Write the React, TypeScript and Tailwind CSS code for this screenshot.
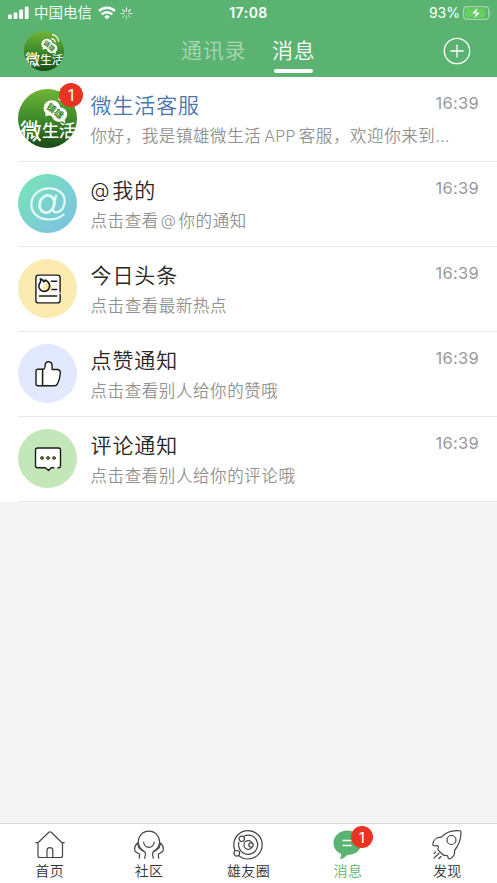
import React from 'react';

interface Message {
  id: string;
  title: React.ReactNode;
  text: React.ReactNode;
  time: string;
  badge?: number;
  official?: boolean;
  icon: React.ReactNode;
}

interface TabItem {
  id: string;
  label: string;
  badge?: number;
  active?: boolean;
  icon: React.ReactNode;
}

const BrandAvatar: React.FC<{ id: string; className: string; waves?: boolean }> = ({ id, className, waves }) => (
  <svg viewBox="0 0 60 60" className={className}>
    <defs>
      <linearGradient id={id} x1="0" y1="0" x2="0" y2="1">
        <stop offset="0" stopColor="#6fb536" />
        <stop offset="0.5" stopColor="#3f8a2b" />
        <stop offset="1" stopColor="#184a18" />
      </linearGradient>
      <clipPath id={`${id}-clip`}>
        <circle cx="30" cy="30" r="30" />
      </clipPath>
    </defs>
    <g clipPath={`url(#${id}-clip)`}>
      <rect width="60" height="60" fill={`url(#${id})`} />
      <g fill="#fff">
        <ellipse cx="34.5" cy="19.5" rx="8.5" ry="8" />
        <ellipse cx="42" cy="26" rx="8" ry="7.5" />
        <path d="M28 24l0 4 5-2zM43 31l5 4-1-7z" />
      </g>
      <g transform="rotate(38 38 22)" fill="#3c8b2c" fontFamily="Noto Sans CJK SC, sans-serif" fontWeight="700">
        <text x="28.5" y="26" fontSize="9.5">镇雄</text>
      </g>
      {waves ? (
        <g fill="none" stroke="#fff" strokeWidth="1.8">
          <path d="M41 11q5 1 6 6M42 5q9 2 10 11" />
        </g>
      ) : (
        <path d="M41 10l4 3" stroke="#fff" strokeWidth="1.2" />
      )}
      <g fill="#fff" fontFamily="Noto Sans CJK SC, sans-serif" fontWeight="500">
        <text x="2" y="50.5" fontSize="22">微</text>
        <text x="24.5" y="49" fontSize="17.5">生</text>
        <text x="41.5" y="49" fontSize="17.5">活</text>
      </g>
    </g>
  </svg>
);

const MentionIcon = () => (
  <svg viewBox="0 0 36 34" className="h-[34px] w-9" fill="none" stroke="#e5fbf5" strokeLinecap="round">
    <path d="M33.7 27.5C29.5 31 24.5 32.5 18.5 32.5 8.500 32.500 1.300 26 1.300 17.500 1.300 8.300 9 1.300 19 1.300c9 0 15.700 5.400 15.700 13 0 6.500-4 11-8.600 11-2.600 0-3.600-1.600-3-4.300L26 8.500" strokeWidth="2.2" />
    <ellipse cx="17" cy="17" rx="7.2" ry="8.8" transform="rotate(20 17 17)" strokeWidth="2.8" />
  </svg>
);

const NewsIcon = () => (
  <svg viewBox="0 0 28 32" className="h-8 w-7" fill="none" stroke="#1c1c1c" strokeWidth="1.4" strokeLinecap="round" strokeLinejoin="round">
    <path d="M26.1 19V4.5a2.4 2.4 0 0 0-2.4-2.4H4.3A2.4 2.4 0 0 0 1.9 4.5v23a2.4 2.4 0 0 0 2.4 2.4h19.4a2.4 2.4 0 0 0 2.4-2.4v-6.3" fill="#fff" />
    <circle cx="13.5" cy="14.5" r="4.5" fill="#fbeaa9" stroke="none" />
    <path d="M6.3 5.800c2 .6 3 1.700 3.500 3 .8-.3 1.200-.9 1.300-1.700 3 1.300 4.500 3.400 4.500 5.900a5.400 5.400 0 0 1-10.800 0c0-1.600.9-2.600 1.500-3.700.6-1.100.5-2.200 0-3.500z" strokeWidth="1.6" />
    <path d="M17.5 8.300h5.200M18 16.500h4.700M5.500 23h17.200" strokeWidth="1.6" />
  </svg>
);

const LikeIcon = () => (
  <svg viewBox="0 0 28 28" className="h-7 w-7" fill="#fff" stroke="#1c1c1c" strokeWidth="1.4" strokeLinecap="round" strokeLinejoin="round">
    <path d="M8.5 9.500c2.300-.2 2.600-1.200 2.600-4 0-5.200 7-4.900 7 .5v3.500h5c2.400 0 3.400 1.500 3.200 3.700-.3 4.400-1.300 7.700-3 11-.6 1-1.300 1.500-2.300 1.500H8.500z" />
    <path d="M8.500 9.200H4a2 2 0 0 0-2 2v12.500a2 2 0 0 0 2 2h4.500z" />
  </svg>
);

const CommentIcon = () => (
  <svg viewBox="0 0 28 26" className="h-[26px] w-7" fill="none" stroke="#1c1c1c" strokeWidth="1.4" strokeLinecap="round" strokeLinejoin="round">
    <path d="M24 21.700h.7a1.800 1.800 0 0 0 1.800-1.800V4a2 2 0 0 0-2-2h-21a2 2 0 0 0-2 2v15.700a2 2 0 0 0 2 2h8l3 2.700 2.700-2.700h2.600" fill="#fff" />
    <g fill="#8fc046" strokeWidth="0.9">
      <circle cx="8" cy="12" r="1.4" />
      <circle cx="14" cy="12" r="1.4" />
      <circle cx="20" cy="12" r="1.4" />
    </g>
  </svg>
);

const lineIcon = {
  viewBox: '0 0 32 32',
  className: 'h-8 w-8',
  fill: 'none',
  stroke: '#444',
  strokeWidth: 1.2,
  strokeLinecap: 'round' as const,
  strokeLinejoin: 'round' as const,
};

const HomeIcon = () => (
  <svg {...lineIcon}>
    <path d="M1.8 13.700h2.200L14.800 3.200q1.200-.9 2.400 0L28 13.700h2.200M4 13.700v12.800a2 2 0 0 0 2 2h20.500a2 2 0 0 0 2-2V14" />
    <path d="M13 28.300v-6.800a2.900 2.900 0 0 1 5.800 0v6.800" />
  </svg>
);

const CommunityIcon = () => (
  <svg {...lineIcon}>
    <path d="M11 22.200a10.600 10.600 0 1 1 9.800 0M10.700 13.200a5.200 5.200 0 0 0 10.400 0" />
    <path d="M4.800 14C1.800 16.200 1 19 2.200 22.500l4.500 2.700-.4 4M5.200 14.500c-.8 3 .4 4.600 2.700 6l3.600 2.200c1.800 1.200 1 3.600.1 6.500" />
    <path d="M27.200 14c3 2.200 3.800 5 2.600 8.500l-4.500 2.700.4 4M26.800 14.500c.8 3-.4 4.600-2.700 6l-3.600 2.200c-1.800 1.200-1 3.600-.1 6.500" />
  </svg>
);

const CircleIcon = () => (
  <svg {...lineIcon}>
    <circle cx="16" cy="15.8" r="14.2" />
    <path d="M12.500 6.800a9.600 9.600 0 1 1-5.700 6.500" />
    <circle cx="16.3" cy="16" r="4.3" />
    <circle cx="9.8" cy="9.8" r="2.7" fill="#fff" />
    <circle cx="19" cy="16" r="2.2" fill="#fff" />
    <circle cx="4.8" cy="24.3" r="2.8" fill="#fff" />
  </svg>
);

const ChatIcon = () => (
  <svg viewBox="0 0 32 32" className="h-8 w-8">
    <path d="M15.5 1.500C7.500 1.500 1.500 7 1.500 14c0 5 2.800 8.800 7.500 10.800.4 1.600-.1 3.300-.8 4.500-.3.700.2 1 .9.700 2.600-1 4.500-2.400 6.100-4C23.500 26 29.500 21 29.500 14S23.500 1.500 15.500 1.500z" fill="#5bb371" />
    <path d="M10.500 11.500h9M10.500 16.500h9" stroke="#fff" strokeWidth="1.3" />
  </svg>
);

const RocketIcon = () => (
  <svg {...lineIcon}>
    <path d="M10.5 8.200C14.500 3.500 21 1 28.500 1.700q1.500.1 1.500 1.600C30 10 28 16 23.500 21.500c.5 4-1.500 7-4.500 8.300-1.200.4-2-.3-2-1.500 0-1.300-.8-2-2-1.800-1.500.3-2.200 0-3.300-1l-3.500-3.300c-1.500-1.300-1.500-2.300-1-3.700.4-1.500-.2-2.200-1.700-1.900-2.500.5-4-.1-3.700-1.600C2.500 10.700 6 8 10.500 8.200z" />
    <circle cx="20.5" cy="11" r="4.5" />
    <path d="M4.800 22.800l-1.800 1.800M8 24.300l-5 4.800M10 27.500l-2 2" />
  </svg>
);

const messages: Message[] = [
  {
    id: 'service',
    title: '微生活客服',
    text: (
      <>
        {'你好\uff0c我是镇雄微生活'}
        <span className="mr-[3px] ml-[3px] text-[16px] tracking-[0.2px]">APP</span>
        {'客服\uff0c欢迎你来到'}
        <span className="tracking-[1px]">…</span>
      </>
    ),
    time: '16:39',
    badge: 1,
    official: true,
    icon: <BrandAvatar id="service-bg" className="size-[59px]" />,
  },
  {
    id: 'mention',
    title: (
      <>
        <span className="mr-[2px] inline-block -translate-y-px text-[19.5px]">@</span>我的
      </>
    ),
    text: (
      <>
        点击查看<span className="mx-[2px] inline-block -translate-y-px text-[15.5px] leading-none">@</span>你的通知
      </>
    ),
    time: '16:39',
    icon: (
      <div className="flex size-[59px] items-center justify-center rounded-full bg-linear-to-br from-[#79e6b5] to-[#7dbde2]">
        <MentionIcon />
      </div>
    ),
  },
  {
    id: 'news',
    title: '今日头条',
    text: '点击查看最新热点',
    time: '16:39',
    icon: <div className="flex size-[59px] items-center justify-center rounded-full bg-[#fbebb0]"><NewsIcon /></div>,
  },
  {
    id: 'like',
    title: '点赞通知',
    text: '点击查看别人给你的赞哦',
    time: '16:39',
    icon: <div className="flex size-[59px] items-center justify-center rounded-full bg-[#e2e8fd]"><LikeIcon /></div>,
  },
  {
    id: 'comment',
    title: '评论通知',
    text: '点击查看别人给你的评论哦',
    time: '16:39',
    icon: <div className="flex size-[59px] items-center justify-center rounded-full bg-[#c4e7b9]"><CommentIcon /></div>,
  },
];

const tabs: TabItem[] = [
  { id: 'home', label: '首页', icon: <HomeIcon /> },
  { id: 'community', label: '社区', icon: <CommunityIcon /> },
  { id: 'circle', label: '雄友圈', icon: <CircleIcon /> },
  { id: 'message', label: '消息', icon: <ChatIcon />, badge: 1, active: true },
  { id: 'discover', label: '发现', icon: <RocketIcon /> },
];

const StatusBar = () => (
  <div className="flex h-[26px] items-center justify-between pr-[6px] pl-2 text-white">
    <div className="flex w-[180px] items-center">
      <svg viewBox="0 0 22 14" className="h-[14px] w-[22px] shrink-0" fill="#fff">
        <rect x="0" y="8.5" width="3.8" height="4.5" rx="1" />
        <rect x="5.6" y="6.5" width="3.8" height="6.5" rx="1" />
        <rect x="11.2" y="3.5" width="3.8" height="9.5" rx="1" />
        <rect x="16.8" y="0.5" width="3.8" height="12.5" rx="1" />
      </svg>
      <span className="ml-1 text-[14.5px] leading-5 font-[350]">中国电信</span>
      <svg viewBox="0 0 18 14" className="ml-[6px] h-[14px] w-[18px] shrink-0" fill="none" stroke="#fff" strokeWidth="2.5">
        <path d="M1 5a11.5 11.5 0 0 1 16 0M3.800 8.400a7.200 7.200 0 0 1 10.400 0" />
        <path d="M6.300 10.600a4 4 0 0 1 5.400 0L9 13.500z" fill="#fff" stroke="none" />
      </svg>
      <svg viewBox="0 0 14 14" className="ml-1 h-[13px] w-[13px] shrink-0" stroke="#fff" strokeWidth="1.2" strokeLinecap="round">
        <path d="M7 1v3.200M11.200 2.800L9 5M2.800 2.800L5 5" />
        <path d="M13 7H9.800M4.200 7H1" opacity="0.75" />
        <path d="M11.200 11.200L9 9M7 13V9.800M2.800 11.200L5 9" opacity="0.5" />
      </svg>
    </div>
    <span className="-ml-[2px] text-[14px] leading-5 font-semibold tracking-[0.5px]">17:08</span>
    <div className="flex w-[180px] items-center justify-end">
      <span className="text-[14px] leading-5">93%</span>
      <svg viewBox="0 0 28 14" className="ml-[3px] h-[14px] w-7">
        <rect x="0.6" y="0.6" width="25" height="12.8" rx="3.5" fill="none" stroke="#a4d5af" strokeWidth="1.2" />
        <rect x="2.2" y="2.2" width="20" height="9.6" rx="2" fill="#65d060" />
        <path d="M26.700 4.700q2 2.300 0 4.600z" fill="#a4d5af" />
        <path d="M15 1L8.500 7.700h4L11 13 17.500 6.300h-4z" fill="#fff" stroke="#5bb371" strokeWidth="0.5" />
      </svg>
    </div>
  </div>
);

const Header = () => (
  <header className="h-[77px] bg-[#5bb371]">
    <StatusBar />
    <div className="grid h-[51px] grid-cols-[157px_1fr_40px] items-start pr-[14px] pl-6">
      <BrandAvatar id="me-bg" className="mt-[5px] size-10" waves />
      <nav className="flex gap-[26px] text-[21px] leading-[30px] font-[350] tracking-[0.7px]">
        <span className="mt-[10px] text-[#a9d8b4]">通讯录</span>
        <div className="mt-[10px] flex flex-col items-center text-white">
          <span>消息</span>
          <span className="mt-[3px] h-[3.5px] w-[39px] rounded-full bg-white" />
        </div>
      </nav>
      <svg viewBox="0 0 28 28" className="mt-[11px] size-7" fill="none" stroke="#fff" strokeWidth="1.3">
        <circle cx="14" cy="14" r="12.7" />
        <path d="M14 7.500v13M7.500 14h13" />
      </svg>
    </div>
  </header>
);

const MessageRow: React.FC<{ message: Message }> = ({ message }) => (
  <li className="flex h-[85.1px] pl-[18px]">
    <div className="flex flex-1 border-b border-[#e9e9e9] pr-[18px]">
      <div className="relative mt-3 size-[59px] shrink-0">
        {message.icon}
        {message.badge && (
          <span className="absolute -top-[6px] left-[41px] flex size-6 items-center justify-center rounded-full bg-[#e93323] text-[16px] leading-none text-white">
            {message.badge}
          </span>
        )}
      </div>
      <div className="ml-[13.5px] flex-1">
        <div className="mt-[14px] flex h-[30px] justify-between">
          <h2 className={`text-[21px] leading-[30px] font-[350] tracking-[0.9px] ${message.official ? 'text-[#4a75ae]' : 'text-[#262626]'}`}>
            {message.title}
          </h2>
          <time className="-mt-px text-[16.5px] leading-[27px] tracking-[0.3px] text-[#999]">{message.time}</time>
        </div>
        <p className="h-[30px] text-[16.5px] leading-[30px] font-[350] tracking-[0.58px] whitespace-nowrap text-[#929292]">{message.text}</p>
      </div>
    </div>
  </li>
);

const TabBar = () => (
  <nav className="grid h-[60px] grid-cols-5 border-t border-[#d8d8d8] bg-white">
    {tabs.map((tab) => (
      <div key={tab.id} className="flex flex-col items-center pt-[5px]">
        <div className="relative size-8">
          {tab.icon}
          {tab.badge && (
            <span className="absolute -top-[3px] left-[19px] flex size-[22px] items-center justify-center rounded-full bg-[#e93323] text-[15px] leading-none text-white">
              {tab.badge}
            </span>
          )}
        </div>
        <span className={`text-[14px] leading-5 font-[350] tracking-[0.4px] ${tab.active ? 'text-[#5bb371]' : 'text-[#333]'}`}>{tab.label}</span>
      </div>
    ))}
  </nav>
);

const App: React.FC = () => {
  return (
    <div className="flex h-[883px] w-[497px] flex-col overflow-hidden bg-[#f4f4f4] font-['Inter','Noto_Sans_CJK_SC',sans-serif]">
      <Header />
      <ul className="bg-white">
        {messages.map((message) => (
          <MessageRow key={message.id} message={message} />
        ))}
      </ul>
      <div className="flex-1" />
      <TabBar />
    </div>
  );
};

export default App;
